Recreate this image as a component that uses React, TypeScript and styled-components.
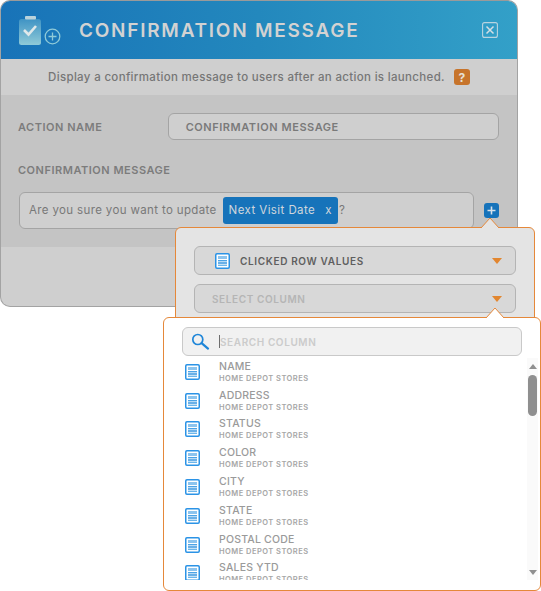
import React from 'react';
import styled, { createGlobalStyle } from 'styled-components';

const GlobalStyle = createGlobalStyle`
  html, body {
    margin: 0;
    padding: 0;
    background: #fff;
    font-family: Inter, "Open Sans", "Liberation Sans", sans-serif;
  }
  * { box-sizing: border-box; }
`;

const Page = styled.div`
  position: relative;
  width: 541px;
  height: 591px;
  overflow: hidden;
`;

const Modal = styled.div`
  width: 518px;
  height: 307px;
  border: 1px solid #a3a3a3;
  border-top-color: #9a9a9a;
  border-radius: 10px;
  overflow: hidden;
  background: #cfcfcf;
  display: flex;
  flex-direction: column;
`;

const Header = styled.div`
  height: 58px;
  flex: none;
  display: flex;
  align-items: center;
  padding: 0 19px 0 18px;
  background: linear-gradient(90deg, #1873b8 0%, #2388bd 50%, #33a0c8 100%);
`;

const Title = styled.div`
  margin-left: 18px;
  flex: 1;
  color: #d2d2d2;
  font-size: 19px;
  font-weight: 600;
  letter-spacing: 1.75px;
  white-space: nowrap;
`;

const Hint = styled.div`
  height: 36px;
  flex: none;
  display: flex;
  align-items: center;
  justify-content: center;
  gap: 9px;
  font-size: 11.5px;
  font-weight: 500;
  letter-spacing: 0.33px;
  color: #767676;
  background: #cfcfcf;
`;

const HelpBadge = styled.span`
  width: 16px;
  height: 16px;
  border-radius: 3px;
  background: #c7742b;
  color: #e6e0d6;
  font-size: 12px;
  font-weight: 700;
  display: flex;
  align-items: center;
  justify-content: center;
`;

const Body = styled.div`
  height: 152px;
  flex: none;
  padding: 18px 18px 0 17px;
  background: #c4c4c4;
`;

const NameRow = styled.div`
  display: flex;
  align-items: center;
  height: 27px;
`;

const FieldLabel = styled.div`
  width: 150px;
  font-size: 11px;
  font-weight: 600;
  letter-spacing: 0.52px;
  color: #7c7c7c;
`;

const NameInput = styled.div`
  width: 332px;
  height: 27px;
  padding-left: 17px;
  display: flex;
  align-items: center;
  border: 1px solid #a4a4a4;
  border-radius: 6px;
  background: #cfcfcf;
  color: #7a7a7a;
  font-size: 11px;
  font-weight: 600;
  letter-spacing: 0.55px;
`;

const MessageLabel = styled(FieldLabel)`
  width: auto;
  margin-top: 23px;
`;

const MessageRow = styled.div`
  display: flex;
  align-items: center;
  gap: 10px;
  margin-top: 15px;
`;

const MessageBox = styled.div`
  width: 455px;
  height: 37px;
  margin-left: 1px;
  padding-left: 9px;
  padding-bottom: 1px;
  display: flex;
  align-items: center;
  border: 1px solid #a4a4a4;
  border-radius: 6px;
  background: #cfcfcf;
  color: #787878;
  font-size: 11.5px;
  letter-spacing: 0.36px;
  white-space: nowrap;
`;

const Chip = styled.span`
  height: 27px;
  margin: 0 1px 0 6px;
  padding: 0 6px 0 6px;
  display: inline-flex;
  align-items: center;
  gap: 10px;
  border-radius: 3px;
  background: #1673ba;
  color: #cfd6dc;
  font-size: 11.5px;
  letter-spacing: 0.42px;
`;

const AddButton = styled.span`
  width: 15px;
  height: 15px;
  border-radius: 3px;
  background: #1673ba;
  display: flex;
  align-items: center;
  justify-content: center;
`;

const Popover = styled.div<{ $fill: string }>`
  position: absolute;
  border: 1px solid #e5883a;
  border-radius: 6px;
  background: ${p => p.$fill};
`;

const ValuesPopover = styled(Popover)`
  left: 175px;
  top: 227px;
  width: 360px;
  height: 100px;
  padding: 18px 18px 0 18px;
  display: flex;
  flex-direction: column;
  gap: 9px;
`;

const ColumnPopover = styled(Popover)`
  left: 163px;
  top: 317px;
  width: 378px;
  height: 274px;
  padding: 9px 18px 0 18px;
`;

const Notch = styled.svg<{ $left: number; $top: number }>`
  position: absolute;
  left: ${p => p.$left}px;
  top: ${p => p.$top}px;
  z-index: 2;
`;

const SelectBox = styled.div`
  height: 29px;
  display: flex;
  align-items: center;
  border: 1px solid #b4b4b4;
  border-radius: 6px;
  background: #d8d8d8;
  padding-right: 13px;
`;

const SelectText = styled.span<{ $muted?: boolean }>`
  flex: 1;
  margin-left: ${p => (p.$muted ? '17px' : '10px')};
  font-size: 10px;
  font-weight: 600;
  letter-spacing: ${p => (p.$muted ? '0.6px' : '0.65px')};
  color: ${p => (p.$muted ? '#b5b5b5' : '#5f5f5f')};
`;

const Caret = styled.span`
  width: 0;
  height: 0;
  border-left: 5.5px solid transparent;
  border-right: 5.5px solid transparent;
  border-top: 6px solid #e2862f;
`;

const SelectIcon = styled.span`
  margin-left: 20px;
  display: flex;
`;

const SearchBox = styled.div`
  width: 340px;
  height: 29px;
  display: flex;
  align-items: center;
  border: 1px solid #c9c9c9;
  border-radius: 6px;
  background: #f1f1f1;
  padding-left: 8px;
`;

const Cursor = styled.span`
  width: 1px;
  height: 13px;
  margin-left: 9px;
  background: #6e6e6e;
`;

const SearchText = styled.span`
  font-size: 10px;
  font-weight: 600;
  letter-spacing: 0.6px;
  color: #cbcbcb;
`;

const ListArea = styled.div`
  display: flex;
  height: 222px;
  margin-top: 2px;
  margin-right: -16px;
`;

const Rows = styled.div`
  flex: 1;
  overflow: hidden;
`;

const Row = styled.div`
  height: 28.8px;
  display: flex;
  align-items: center;
  padding-left: 3px;
`;

const RowIcon = styled.span`
  display: flex;
  margin-top: -1px;
`;

const RowText = styled.div`
  margin-left: 19px;
  display: flex;
  flex-direction: column;
`;

const RowName = styled.span`
  font-size: 10.5px;
  line-height: 12px;
  font-weight: 500;
  letter-spacing: 0.2px;
  color: #9a9a9a;
`;

const RowSource = styled.span`
  margin-top: 1px;
  font-size: 7.5px;
  line-height: 10px;
  font-weight: 600;
  letter-spacing: 0.47px;
  color: #a6a6a6;
`;

const Scrollbar = styled.div`
  width: 11px;
  flex: none;
  position: relative;
  background: #fafafa;
  display: flex;
  flex-direction: column;
  align-items: center;
  justify-content: space-between;
  padding: 6px 0 5px;
`;

const Thumb = styled.div`
  position: absolute;
  left: 1px;
  top: 17px;
  width: 9px;
  height: 41px;
  border-radius: 5px;
  background: #8f8f8f;
`;

const ScrollArrow = styled.span<{ $up?: boolean }>`
  width: 0;
  height: 0;
  border-left: 4.5px solid transparent;
  border-right: 4.5px solid transparent;
  ${p => (p.$up ? 'border-bottom: 5px solid #8f8f8f;' : 'border-top: 5px solid #8f8f8f;')}
`;

const SheetIcon = () => (
  <svg width="15" height="16" viewBox="0 0 15 16">
    <rect x="0.75" y="0.75" width="13.5" height="14.5" rx="1.2" fill="#fff" stroke="#2b93e6" strokeWidth="1.5" />
    <rect x="3" y="3" width="9" height="3" fill="#8cc4ee" />
    <rect x="3" y="7" width="9" height="1.4" fill="#4ba3e6" />
    <rect x="3" y="9.3" width="9" height="1.4" fill="#2b8fdd" />
    <rect x="3" y="11.6" width="9" height="1.4" fill="#6db6ea" />
  </svg>
);

const ClipboardIcon = () => (
  <svg width="42" height="29" viewBox="0 0 42 29">
    <defs>
      <linearGradient id="clip" x1="0" y1="0" x2="0" y2="1">
        <stop offset="0" stopColor="#3f93c4" />
        <stop offset="1" stopColor="#8fcad8" />
      </linearGradient>
    </defs>
    <rect x="0" y="3" width="22" height="26" rx="2.5" fill="url(#clip)" />
    <rect x="6" y="0" width="11" height="3.6" rx="1" fill="#b9d2dc" />
    <path d="M5 14 L9.5 18.5 L17 10" fill="none" stroke="#dfe8ea" strokeWidth="2.6" />
    <circle cx="33.5" cy="20.5" r="7.3" fill="none" stroke="#8fcad8" strokeWidth="1.3" />
    <path d="M29.5 20.5 H37.5 M33.5 16.5 V24.5" stroke="#8fcad8" strokeWidth="1.3" />
  </svg>
);

const CloseIcon = () => (
  <svg width="16" height="16" viewBox="0 0 16 16">
    <rect x="0.6" y="0.6" width="14.8" height="14.8" rx="2" fill="none" stroke="#b9d4e0" strokeWidth="1.1" />
    <path d="M4.5 4.5 L11.5 11.5 M11.5 4.5 L4.5 11.5" stroke="#d4dfe4" strokeWidth="1.5" />
  </svg>
);

const SearchIcon = () => (
  <svg width="19" height="17" viewBox="0 0 19 17">
    <circle cx="6.8" cy="6.5" r="5" fill="none" stroke="#1f86d8" strokeWidth="1.7" />
    <path d="M10.6 10.2 L17 15.6" stroke="#1f86d8" strokeWidth="2.2" strokeLinecap="round" />
  </svg>
);

const columns = ['NAME', 'ADDRESS', 'STATUS', 'COLOR', 'CITY', 'STATE', 'POSTAL CODE', 'SALES YTD'];

export default function App() {
  return (
    <Page>
      <GlobalStyle />
      <Modal>
        <Header>
          <ClipboardIcon />
          <Title>CONFIRMATION MESSAGE</Title>
          <CloseIcon />
        </Header>
        <Hint>
          Display a confirmation message to users after an action is launched.
          <HelpBadge>?</HelpBadge>
        </Hint>
        <Body>
          <NameRow>
            <FieldLabel>ACTION NAME</FieldLabel>
            <NameInput>CONFIRMATION MESSAGE</NameInput>
          </NameRow>
          <MessageLabel>CONFIRMATION MESSAGE</MessageLabel>
          <MessageRow>
            <MessageBox>
              Are you sure you want to update
              <Chip>
                Next Visit Date <span>x</span>
              </Chip>
              ?
            </MessageBox>
            <AddButton>
              <svg width="9" height="9" viewBox="0 0 9 9">
                <path d="M0.5 4.5 H8.5 M4.5 0.5 V8.5" stroke="#d8e2ea" strokeWidth="1.6" />
              </svg>
            </AddButton>
          </MessageRow>
        </Body>
      </Modal>

      <ValuesPopover $fill="#e4e4e4">
        <SelectBox>
          <SelectIcon>
            <SheetIcon />
          </SelectIcon>
          <SelectText>CLICKED ROW VALUES</SelectText>
          <Caret />
        </SelectBox>
        <SelectBox>
          <SelectText $muted>SELECT COLUMN</SelectText>
          <Caret />
        </SelectBox>
      </ValuesPopover>
      <Notch $left={480} $top={217} width="20" height="11" viewBox="0 0 20 11">
        <path d="M1 11 L10 1 L19 11" fill="#e4e4e4" stroke="#e5883a" strokeWidth="1" />
      </Notch>

      <ColumnPopover $fill="#fff">
        <SearchBox>
          <SearchIcon />
          <Cursor />
          <SearchText>SEARCH COLUMN</SearchText>
        </SearchBox>
        <ListArea>
          <Rows>
            {columns.map(name => (
              <Row key={name}>
                <RowIcon>
                  <SheetIcon />
                </RowIcon>
                <RowText>
                  <RowName>{name}</RowName>
                  <RowSource>HOME DEPOT STORES</RowSource>
                </RowText>
              </Row>
            ))}
          </Rows>
          <Scrollbar>
            <ScrollArrow $up />
            <Thumb />
            <ScrollArrow />
          </Scrollbar>
        </ListArea>
      </ColumnPopover>
      <Notch $left={485} $top={307} width="20" height="11" viewBox="0 0 20 11">
        <path d="M1 11 L10 1 L19 11" fill="#fff" stroke="#e5883a" strokeWidth="1" />
      </Notch>
    </Page>
  );
}
